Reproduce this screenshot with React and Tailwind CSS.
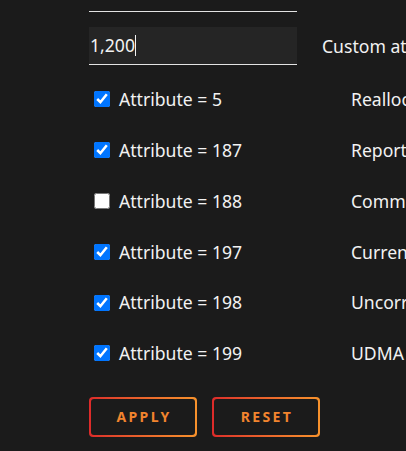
import React from 'react';

const rows = [
  { id: 5, checked: true, label: 'Reallocated Sectors Count' },
  { id: 187, checked: true, label: 'Reported Uncorrectable Errors' },
  { id: 188, checked: false, label: 'Command Timeout' },
  { id: 197, checked: true, label: 'Current Pending Sector Count' },
  { id: 198, checked: true, label: 'Uncorrectable Sector Count' },
  { id: 199, checked: true, label: 'UDMA CRC Error Count' },
];

const GradientButton = ({ children }) => (
  <button className="w-[108px] h-[40px] rounded-[4px] p-[2px] bg-gradient-to-r from-[#dc2a2a] to-[#f7922c]">
    <span className="flex w-full h-full items-center justify-center rounded-[3px] bg-[#1b1b1b] text-[14px] font-bold tracking-[0.17em] text-[#f2842e] pl-[2px]">
      {children}
    </span>
  </button>
);

const App = () => {
  return (
    <div className="w-[406px] h-[451px] overflow-hidden bg-[#1b1b1b] text-[#f2f2f2] text-[17.6px] font-['Noto_Sans',sans-serif]">
      <div className="pl-[89px] w-[700px]">
        <div className="w-[208px] h-[12px] border-b border-[#e3e3e3]" />

        <div className="mt-[15px] flex items-center">
          <div className="w-[208px] h-[38px] bg-[#252525] border-b border-[#e3e3e3] flex items-center pl-[1px]">
            <span>1,200</span>
            <span className="w-px h-[21px] bg-[#f2f2f2]" />
          </div>
          <span className="ml-[25px] whitespace-nowrap">Custom attribute threshold</span>
        </div>

        <div className="mt-[9px]">
          {rows.map((r) => (
            <div key={r.id} className="h-[50.8px] flex items-center">
              <label className="w-[262px] flex items-center">
                <input
                  type="checkbox"
                  defaultChecked={r.checked}
                  className="m-0 ml-[5px] w-4 h-4"
                />
                <span className="ml-[9px]">Attribute = {r.id}</span>
              </label>
              <span className="whitespace-nowrap">{r.label}</span>
            </div>
          ))}
        </div>

        <div className="mt-[18px] flex gap-[15px]">
          <GradientButton>APPLY</GradientButton>
          <GradientButton>RESET</GradientButton>
        </div>
      </div>
    </div>
  );
};

export default App;
